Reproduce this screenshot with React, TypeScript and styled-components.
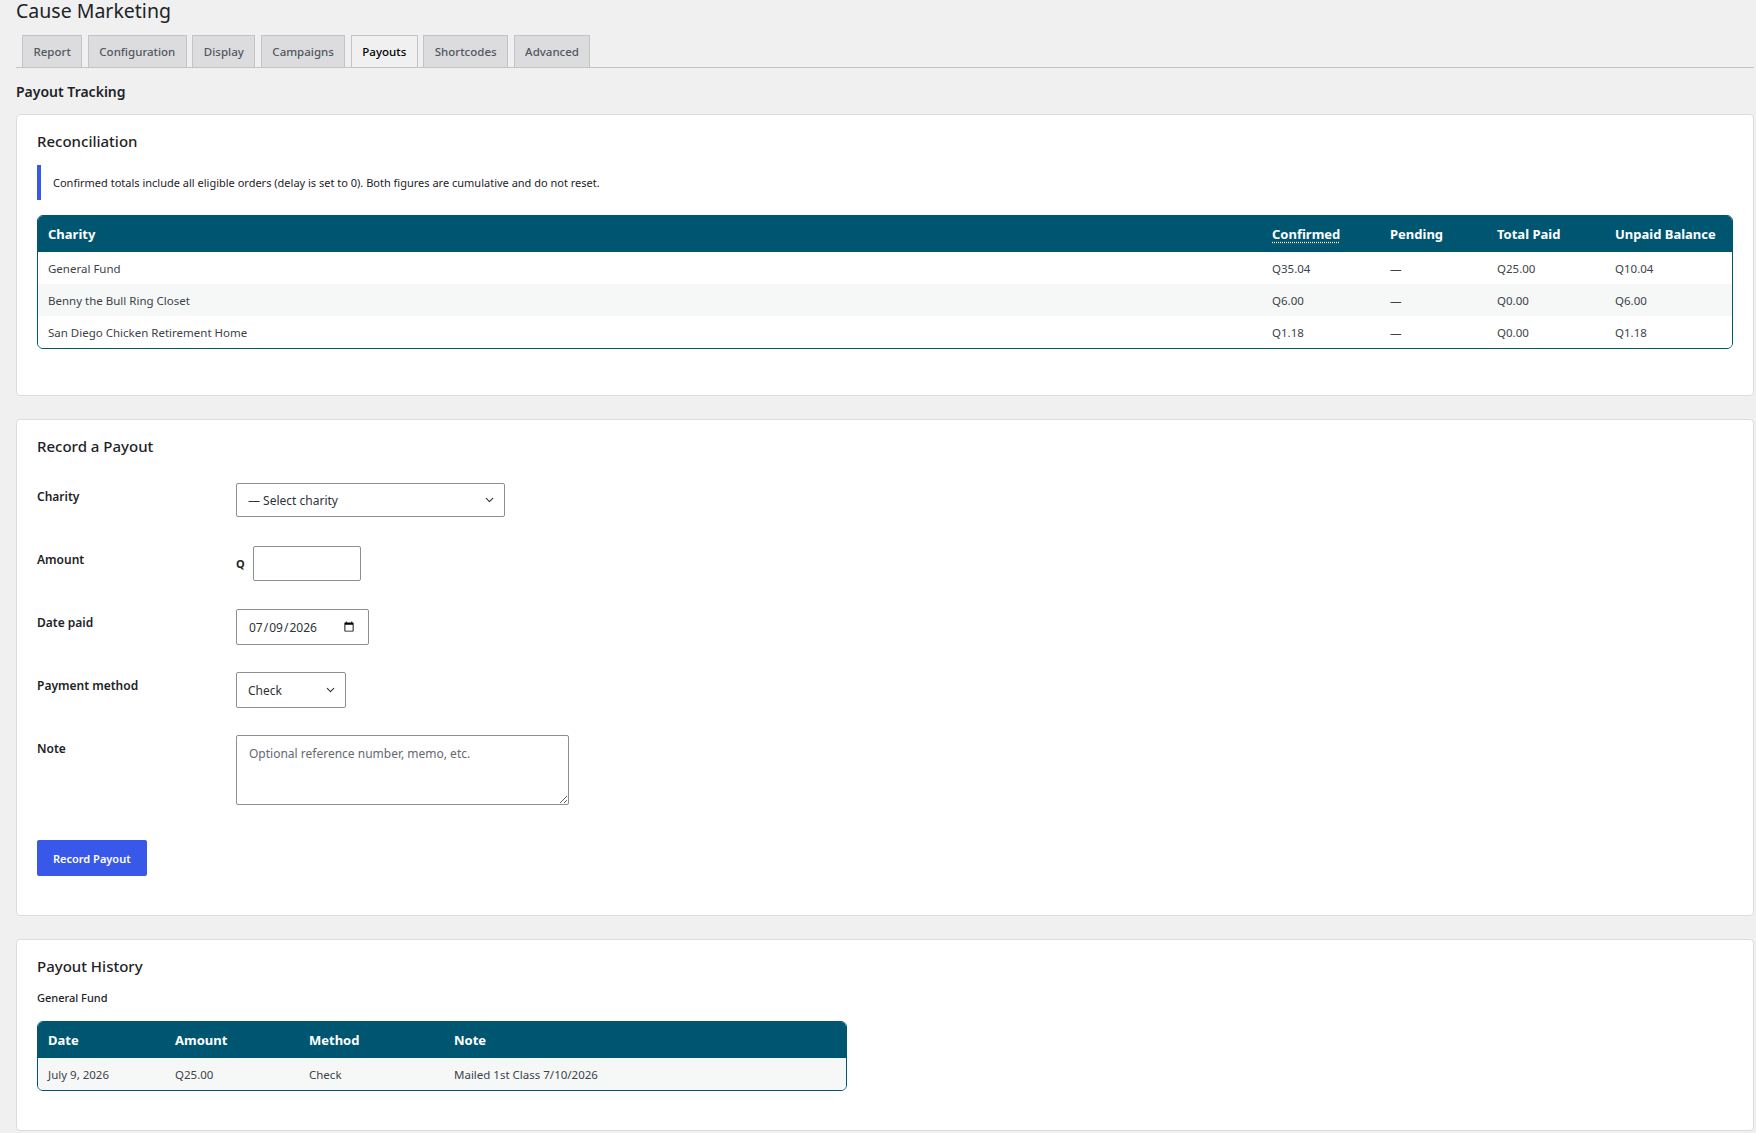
import styled, { createGlobalStyle } from "styled-components";
import { ChevronDown } from "lucide-react";

const GlobalStyle = createGlobalStyle`
  * {
    box-sizing: border-box;
  }
  body {
    margin: 0;
    background: #f0f0f1;
    color: #1d2327;
    font-family: "Noto Sans", "Open Sans", sans-serif;
  }
`;

const Page = styled.div`
  padding: 0 2px 24px 16px;
`;

const Title = styled.h1`
  margin: -2px 0 0;
  font-size: 19.5px;
  font-weight: 400;
  line-height: 26px;
`;

const Tabs = styled.nav`
  display: flex;
  gap: 5.5px;
  margin-top: 11px;
  padding-left: 6px;
  border-bottom: 1px solid #c3c4c7;
`;

const Tab = styled.a<{ $active?: boolean }>`
  display: block;
  height: 32px;
  padding: 0 10.5px;
  border: 1px solid #c3c4c7;
  border-bottom: 0;
  background: ${(p) => (p.$active ? "#f0f0f1" : "#dcdcde")};
  color: ${(p) => (p.$active ? "#000" : "#50575e")};
  font-size: 11.5px;
  font-weight: 500;
  line-height: 31px;
  text-decoration: none;
`;

const PageHeading = styled.h2`
  margin: 14px 0 12px;
  font-size: 14px;
  font-weight: 600;
  line-height: 20px;
`;

const Card = styled.section<{ $pb: number }>`
  background: #fff;
  border: 1px solid #dcdcde;
  border-radius: 4px;
  padding: 16px 20px ${(p) => p.$pb}px;
  margin-bottom: 23px;
`;

const CardTitle = styled.h3`
  margin: 0;
  font-size: 15px;
  font-weight: 500;
  line-height: 20px;
`;

const Notice = styled.div`
  display: flex;
  align-items: center;
  height: 35px;
  margin-top: 14px;
  padding: 0 12px;
  border-left: 4px solid #3858e9;
  font-size: 11px;
`;

const Table = styled.table<{ $width?: string; $mt: number }>`
  width: ${(p) => p.$width || "100%"};
  margin-top: ${(p) => p.$mt}px;
  border-collapse: separate;
  border-spacing: 0;
  table-layout: fixed;
  border: 1px solid #005670;
  border-radius: 6px;
  overflow: hidden;
`;

const Th = styled.th<{ $w?: number }>`
  width: ${(p) => (p.$w ? `${p.$w}px` : "auto")};
  height: 36px;
  padding: 0 10px;
  background: #005670;
  color: #fff;
  font-size: 13px;
  font-weight: 700;
  text-align: left;
`;

const Abbr = styled.abbr`
  text-decoration: underline dotted;
  text-underline-offset: 3px;
  cursor: help;
`;

const Tr = styled.tr<{ $striped?: boolean }>`
  background: ${(p) => (p.$striped ? "#f6f7f7" : "#fff")};
`;

const Td = styled.td`
  height: 32px;
  padding: 0 10px;
  color: #3c434a;
  font-size: 11.5px;
`;

const Form = styled.div`
  margin-top: 27px;
`;

const FormRow = styled.div`
  display: grid;
  grid-template-columns: 199px 1fr;
  align-items: start;
  min-height: 63px;
`;

const Label = styled.label`
  padding-top: 5px;
  font-size: 12px;
  font-weight: 600;
  line-height: 18px;
`;

const SelectWrap = styled.div<{ $w: number }>`
  position: relative;
  width: ${(p) => p.$w}px;
`;

const Select = styled.select<{ $h: number }>`
  appearance: none;
  width: 100%;
  height: ${(p) => p.$h}px;
  padding: 0 28px 0 11px;
  border: 1px solid #8c8f94;
  border-radius: 2px;
  background: #fff;
  color: #2c3338;
  font-family: inherit;
  font-size: 12px;
`;

const Chevron = styled(ChevronDown)`
  position: absolute;
  right: 9px;
  top: 50%;
  transform: translateY(-50%);
  color: #2c3338;
  pointer-events: none;
`;

const Currency = styled.div`
  display: flex;
  align-items: center;
  gap: 8px;
  font-size: 11px;
  font-weight: 700;
`;

const TextInput = styled.input<{ $w: number; $h: number }>`
  width: ${(p) => p.$w}px;
  height: ${(p) => p.$h}px;
  padding: 0 11px;
  border: 1px solid #8c8f94;
  border-radius: 2px;
  background: #fff;
  color: #2c3338;
  font-family: inherit;
  font-size: 12px;
`;

const TextArea = styled.textarea`
  width: 333px;
  height: 70px;
  padding: 9px 12px;
  border: 1px solid #8c8f94;
  border-radius: 2px;
  font-family: inherit;
  font-size: 12px;
  color: #2c3338;

  &::placeholder {
    color: #646970;
  }
`;

const Button = styled.button`
  height: 36px;
  margin-top: 35px;
  padding: 0 16px;
  border: 0;
  border-radius: 2px;
  background: #3858e9;
  color: #fff;
  font-family: inherit;
  font-size: 11px;
  font-weight: 600;
  cursor: pointer;
`;

const SubHeading = styled.div`
  margin-top: 14px;
  font-size: 11px;
  font-weight: 500;
  line-height: 16px;
`;

const tabs = ["Report", "Configuration", "Display", "Campaigns", "Payouts", "Shortcodes", "Advanced"];

const charities = [
  { name: "General Fund", confirmed: "Q35.04", paid: "Q25.00", unpaid: "Q10.04" },
  { name: "Benny the Bull Ring Closet", confirmed: "Q6.00", paid: "Q0.00", unpaid: "Q6.00" },
  { name: "San Diego Chicken Retirement Home", confirmed: "Q1.18", paid: "Q0.00", unpaid: "Q1.18" },
];

const App = () => {
  return (
    <Page>
      <GlobalStyle />
      <Title>Cause Marketing</Title>
      <Tabs>
        {tabs.map((t) => (
          <Tab key={t} href="#" $active={t === "Payouts"}>
            {t}
          </Tab>
        ))}
      </Tabs>

      <PageHeading>Payout Tracking</PageHeading>

      <Card $pb={46}>
        <CardTitle>Reconciliation</CardTitle>
        <Notice>
          Confirmed totals include all eligible orders (delay is set to 0). Both figures are cumulative and do not reset.
        </Notice>
        <Table $mt={15}>
          <thead>
            <tr>
              <Th>Charity</Th>
              <Th $w={118}>
                <Abbr title="Orders past the confirmation delay">Confirmed</Abbr>
              </Th>
              <Th $w={107}>Pending</Th>
              <Th $w={118}>Total Paid</Th>
              <Th $w={127}>Unpaid Balance</Th>
            </tr>
          </thead>
          <tbody>
            {charities.map((c, i) => (
              <Tr key={c.name} $striped={i % 2 === 1}>
                <Td>{c.name}</Td>
                <Td>{c.confirmed}</Td>
                <Td>—</Td>
                <Td>{c.paid}</Td>
                <Td>{c.unpaid}</Td>
              </Tr>
            ))}
          </tbody>
        </Table>
      </Card>

      <Card $pb={39}>
        <CardTitle>Record a Payout</CardTitle>
        <Form>
          <FormRow>
            <Label>Charity</Label>
            <SelectWrap $w={269}>
              <Select $h={34} defaultValue="">
                <option value="">— Select charity</option>
                {charities.map((c) => (
                  <option key={c.name}>{c.name}</option>
                ))}
              </Select>
              <Chevron size={13} strokeWidth={2} />
            </SelectWrap>
          </FormRow>
          <FormRow>
            <Label>Amount</Label>
            <Currency>
              Q
              <TextInput type="text" $w={108} $h={35} />
            </Currency>
          </FormRow>
          <FormRow>
            <Label>Date paid</Label>
            <TextInput type="date" defaultValue="2026-07-09" $w={133} $h={36} />
          </FormRow>
          <FormRow>
            <Label>Payment method</Label>
            <SelectWrap $w={110}>
              <Select $h={36} defaultValue="check">
                <option value="check">Check</option>
                <option value="ach">ACH</option>
                <option value="wire">Wire</option>
              </Select>
              <Chevron size={13} strokeWidth={2} />
            </SelectWrap>
          </FormRow>
          <FormRow>
            <Label>Note</Label>
            <TextArea placeholder="Optional reference number, memo, etc." />
          </FormRow>
        </Form>
        <Button>Record Payout</Button>
      </Card>

      <Card $pb={39}>
        <CardTitle>Payout History</CardTitle>
        <SubHeading>General Fund</SubHeading>
        <Table $width="810px" $mt={15}>
          <thead>
            <tr>
              <Th $w={127}>Date</Th>
              <Th $w={134}>Amount</Th>
              <Th $w={145}>Method</Th>
              <Th>Note</Th>
            </tr>
          </thead>
          <tbody>
            <Tr $striped>
              <Td>July 9, 2026</Td>
              <Td>Q25.00</Td>
              <Td>Check</Td>
              <Td>Mailed 1st Class 7/10/2026</Td>
            </Tr>
          </tbody>
        </Table>
      </Card>
    </Page>
  );
};

export default App;
